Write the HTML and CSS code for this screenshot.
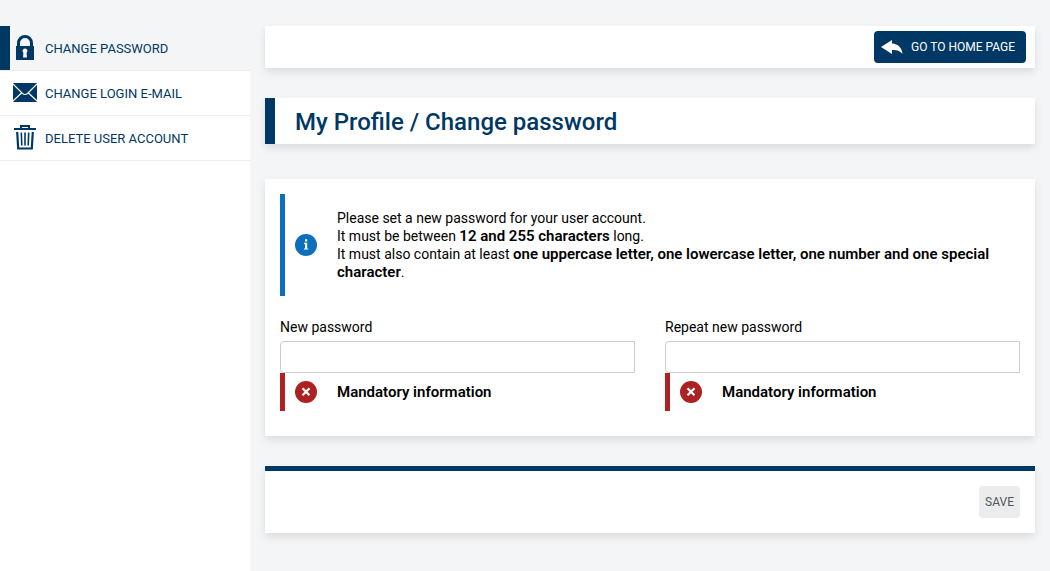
FILE: index.html
```html
<!DOCTYPE html>
<html lang="en">
<head>
    <meta charset="UTF-8">
    <meta name="viewport" content="width=device-width, initial-scale=1.0">
    <title>My Profile / Change password</title>
    <link rel="stylesheet" href="styles.css">
</head>
<body>
<div class="page">
    <nav class="sidebar">
        <ul class="menu">
            <li>
                <a class="menu-item active" href="#password">
                    <svg class="menu-icon" viewBox="0 0 30 30">
                        <path d="M8.500 13V9a6.500 6.500 0 0 1 13 0v4" fill="none" stroke="#003865" stroke-width="3"/>
                        <path d="M6 12h18v14H6z" fill="#003865"/>
                        <path d="M15 14.500a2.400 2.400 0 0 1 1.600 4.200l.3 4.800h-3.800l.3-4.800a2.400 2.400 0 0 1 1.600-4.200z" fill="#fff"/>
                    </svg>
                    Change password
                </a>
            </li>
            <li>
                <a class="menu-item" href="#email">
                    <svg class="menu-icon" viewBox="0 0 30 30">
                        <rect x="3" y="4" width="24" height="19" rx="1" fill="#003865"/>
                        <path d="M3 5l9.500 9.500q2.500 2 5 0L27 5M3 22l8.500-8M27 22l-8.500-8" fill="none" stroke="#fff" stroke-width="1.100"/>
                    </svg>
                    Change login e-mail
                </a>
            </li>
            <li>
                <a class="menu-item" href="#delete">
                    <svg class="menu-icon" viewBox="0 0 30 30">
                        <g fill="none" stroke="#003865">
                            <path d="M4 5h22" stroke-width="2"/>
                            <path d="M11 4.500V2h8v2.500" stroke-width="2"/>
                            <path d="M7.200 8l1 16.500h13.600l1-16.500" stroke-width="2.200"/>
                            <path d="M11.300 8.500l.5 13M15 8.500v13M18.700 8.500l-.5 13" stroke-width="1.600"/>
                        </g>
                    </svg>
                    Delete user account
                </a>
            </li>
        </ul>
    </nav>
    <main class="content">
        <header class="box topbar">
            <button class="btn btn-home" type="button">
                <svg class="btn-icon" viewBox="0 0 22 16">
                    <path d="M0 8L11 1v3.500c6 .2 10 4.500 10.500 10.500-2.500-3.500-5.500-4.300-10.500-4V15z" fill="#fff"/>
                </svg>
                Go to home page
            </button>
        </header>
        <h1 class="box title">My Profile / Change password</h1>
        <form class="form" id="passwordForm">
            <div class="box fields">
                <div class="message info">
                    <svg class="message-icon" viewBox="0 0 22 22">
                        <circle cx="11" cy="11" r="11" fill="#0d6ebd"/>
                        <path d="M10 5.200h2.200v2.200H10zM9 8.700h3.200v5.700h1v1.200H9v-1.200h1V9.900H9z" fill="#fff"/>
                    </svg>
                    <p>
                        Please set a new password for your user account.<br>
                        It must be between <b>12 and 255 characters</b> long.<br>
                        It must also contain at least <b>one uppercase letter, one lowercase letter, one number and one special character</b>.
                    </p>
                </div>
                <div class="columns">
                    <div class="field">
                        <label for="newPassword">New password</label>
                        <input type="password" id="newPassword" aria-describedby="newError">
                        <div class="message error" id="newError">
                            <svg class="message-icon" viewBox="0 0 22 22">
                                <circle cx="11" cy="11" r="11" fill="#ac2222"/>
                                <path d="M7.500 7.200l7 7M14.500 7.200l-7 7" stroke="#fff" stroke-width="2.200"/>
                            </svg>
                            <b>Mandatory information</b>
                        </div>
                    </div>
                    <div class="field">
                        <label for="repeatPassword">Repeat new password</label>
                        <input type="password" id="repeatPassword" aria-describedby="repeatError">
                        <div class="message error" id="repeatError">
                            <svg class="message-icon" viewBox="0 0 22 22">
                                <circle cx="11" cy="11" r="11" fill="#ac2222"/>
                                <path d="M7.500 7.200l7 7M14.500 7.200l-7 7" stroke="#fff" stroke-width="2.200"/>
                            </svg>
                            <b>Mandatory information</b>
                        </div>
                    </div>
                </div>
            </div>
            <div class="box actions">
                <button class="btn btn-save" type="submit" disabled>Save</button>
            </div>
        </form>
    </main>
</div>
</body>
</html>
```
FILE: styles.css
```css
* {
    box-sizing: border-box;
}
body {
    margin: 0;
    background-color: #f4f5f7;
    color: #000;
    font-family: Roboto, sans-serif;
    font-size: 14px;
    line-height: 18px;
}
b {
    font-size: 15px;
    font-weight: 600;
    line-height: 16px;
}
.page {
    display: flex;
    min-height: 100vh;
    padding-top: 26px;
}
.sidebar {
    width: 250px;
    flex-shrink: 0;
    background-color: #fff;
}
.menu {
    margin: 0;
    padding: 0;
    list-style: none;
}
.menu li {
    border-bottom: 1px solid #ededee;
}
.menu-item {
    display: flex;
    align-items: center;
    gap: 5px;
    height: 44px;
    padding: 1px 0 0 10px;
    color: #003865;
    font-size: 13px;
    text-decoration: none;
    text-transform: uppercase;
}
.menu-item.active {
    padding-left: 0;
    border-left: 10px solid #003865;
    background-color: #f4f5f7;
}
.menu-icon {
    width: 30px;
    height: 30px;
}
.content {
    flex: 1;
    padding: 0 15px 38px;
}
.box {
    background-color: #fff;
    box-shadow: 0 4px 8px rgba(0, 0, 0, 0.1);
}
.topbar {
    display: flex;
    justify-content: flex-end;
    padding: 5px 9px;
}
.btn {
    display: flex;
    align-items: center;
    height: 32px;
    border: none;
    border-radius: 4px;
    font-family: inherit;
    font-size: 12px;
    text-transform: uppercase;
}
.btn-home {
    gap: 8px;
    padding: 0 11px 0 7px;
    background-color: #003865;
    color: #fff;
    cursor: pointer;
}
.btn-icon {
    width: 22px;
    height: 16px;
}
.btn-save {
    padding: 0 6px;
    background-color: #ebecee;
    color: #555;
}
.title {
    margin: 30px 0 35px;
    padding: 9px 20px 7px;
    border-left: 10px solid #003865;
    color: #003865;
    font-size: 24px;
    font-weight: 500;
    line-height: 30px;
}
.fields {
    padding: 15px 15px 25px;
}
.message {
    display: flex;
    align-items: center;
    gap: 20px;
    padding: 10px;
    border-left: 5px solid;
}
.message p {
    margin: 0;
}
.message-icon {
    width: 22px;
    height: 22px;
    flex-shrink: 0;
}
.info {
    padding: 15px 10px;
    border-color: #0d6ebd;
}
.error {
    height: 38px;
    border-color: #ac2222;
}
.columns {
    display: grid;
    grid-template-columns: 1fr 1fr;
    gap: 30px;
    margin-top: 22px;
}
.field label {
    display: block;
    margin-bottom: 5px;
}
.field input {
    display: block;
    width: 100%;
    height: 32px;
    padding: 0 10px;
    border: 1px solid #ccc;
    border-radius: 4px 0 0 4px;
    font: inherit;
}
.actions {
    display: flex;
    justify-content: flex-end;
    margin-top: 30px;
    padding: 15px;
    border-top: 5px solid #003865;
}
```
